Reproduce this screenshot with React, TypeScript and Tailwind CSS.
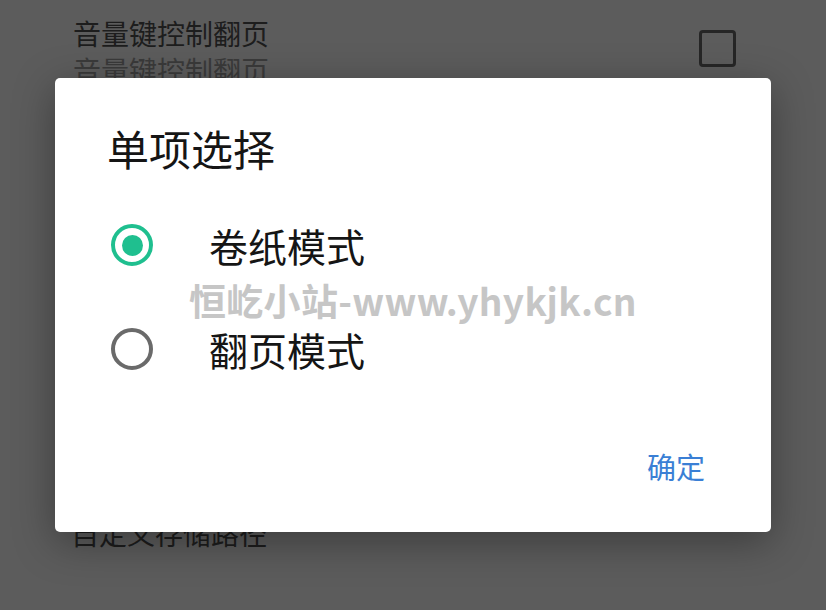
import React from 'react'

const cjk = { fontFamily: '"Noto Sans CJK SC", "Noto Sans", sans-serif' }

function SettingRow({ title, summary, checkbox }: { title: string; summary?: string; checkbox?: boolean }) {
  return (
    <div className="flex items-start justify-between pl-[73px] pr-[90px]">
      <div className="flex flex-col">
        <span className="text-[28px] leading-[38px] text-[#1d1d1d]">{title}</span>
        {summary && <span className="text-[28px] leading-[36px] text-[#3a3a3a]">{summary}</span>}
      </div>
      {checkbox && <div className="mt-[16px] w-[37px] h-[37px] rounded-[4px] border-[3.5px] border-[#262626]" />}
    </div>
  )
}

function Radio({ checked }: { checked: boolean }) {
  return checked ? (
    <div className="w-[42px] h-[42px] rounded-full border-[4.5px] border-[#1fbf8f] flex items-center justify-center">
      <div className="w-[21px] h-[21px] rounded-full bg-[#1fbf8f]" />
    </div>
  ) : (
    <div className="w-[42px] h-[42px] rounded-full border-[4px] border-[#6a6a6a]" />
  )
}

export default function App() {
  const options = [
    { label: '卷纸模式', checked: true },
    { label: '翻页模式', checked: false },
  ]

  return (
    <div className="relative w-[826px] h-[610px] overflow-hidden bg-[#5c5c5c]" style={cjk}>
      <div className="flex flex-col h-full">
        <div className="pt-[14px]">
          <SettingRow title="音量键控制翻页" summary="音量键控制翻页" checkbox />
        </div>
        <div className="mt-auto mb-[60px] pl-[71px]">
          <span className="text-[28px] leading-[34px] text-[#1d1d1d]">自定义存储路径</span>
        </div>
      </div>

      <div className="absolute inset-0 flex items-center justify-center">
        <div className="relative w-[716px] h-[454px] bg-white rounded-[5px] shadow-[0_10px_40px_rgba(0,0,0,0.35)] flex flex-col">
          <div className="pl-[52px] pt-[45px] text-[42px] leading-[50px] text-[#151515]">单项选择</div>

          <div className="flex flex-col mt-[49px] gap-[58px]">
            {options.map((opt) => (
              <div key={opt.label} className="flex items-center pl-[56px] h-[46px]">
                <Radio checked={opt.checked} />
                <span className="ml-[56px] text-[39px] leading-[46px] text-[#151515]">{opt.label}</span>
              </div>
            ))}
          </div>

          <div className="mt-auto mb-[48px] flex justify-end pr-[66px]">
            <span className="text-[29px] leading-[36px] text-[#3a7fd5]">确定</span>
          </div>

          <div className="absolute left-[134px] top-[200px] text-[37px] leading-[44px] font-bold text-[#c6c6c6] whitespace-nowrap tracking-[0.3px]">
            恒屹小站-www.yhykjk.cn
          </div>
        </div>
      </div>
    </div>
  )
}
